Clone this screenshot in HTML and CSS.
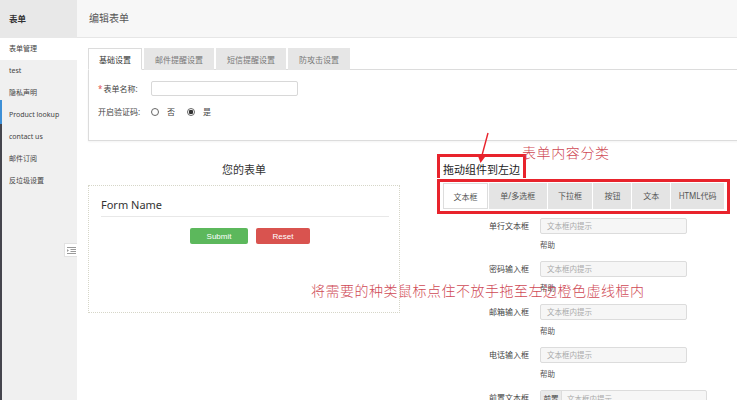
FILE: index.html
```html
<!DOCTYPE html>
<html lang="zh-CN">
<head>
    <meta charset="UTF-8">
    <title>编辑表单</title>
    <link rel="stylesheet" href="styles.css">
</head>
<body>
<div class="page">

    <aside class="sidebar">
        <div class="side-title">表单</div>
        <ul class="side-menu">
            <li class="active">表单管理</li>
            <li>test</li>
            <li>隐私声明</li>
            <li>Product lookup</li>
            <li>contact us</li>
            <li>邮件订阅</li>
            <li>反垃圾设置</li>
        </ul>
        <button class="side-toggle" title="收起">
            <svg width="9" height="7" viewBox="0 0 9 7">
                <path d="M0 0.5H9M3.5 2.5H9M3.5 4.5H9M0 6.5H9" stroke="#9a9a9a" stroke-width="1"/>
                <path d="M0 2L2 3.5L0 5Z" fill="#9a9a9a"/>
            </svg>
        </button>
    </aside>

    <main class="main">
        <div class="main-head">编辑表单</div>

        <div class="content">
            <!-- 设置 tabs -->
            <div class="tabs">
                <span class="tab active">基础设置</span>
                <span class="tab">邮件提醒设置</span>
                <span class="tab">短信提醒设置</span>
                <span class="tab">防攻击设置</span>
            </div>
            <div class="panel">
                <div class="panel-row">
                    <label class="panel-label"><i class="req">*</i>表单名称:</label>
                    <input class="panel-input" type="text">
                </div>
                <div class="panel-row">
                    <label class="panel-label">开启验证码:</label>
                    <span class="radio"></span><span class="radio-text">否</span>
                    <span class="radio checked"></span><span class="radio-text">是</span>
                </div>
            </div>

            <div class="builder">
                <!-- 左边: 表单 -->
                <section class="your-form">
                    <h3 class="your-form-title">您的表单</h3>
                    <div class="drop-zone">
                        <div class="form-name">Form Name</div>
                        <div class="form-actions">
                            <button class="btn btn-submit">Submit</button>
                            <button class="btn btn-reset">Reset</button>
                        </div>
                    </div>
                </section>

                <!-- 右边: 组件 -->
                <section class="widgets">
                    <h3 class="widgets-title">拖动组件到左边</h3>
                    <div class="widget-tabs">
                        <span class="wtab active">文本框</span>
                        <span class="wtab">单/多选框</span>
                        <span class="wtab">下拉框</span>
                        <span class="wtab">按钮</span>
                        <span class="wtab">文本</span>
                        <span class="wtab">HTML代码</span>
                    </div>
                    <div class="widget-list">
                        <div class="widget">
                            <label class="widget-label">单行文本框</label>
                            <div class="widget-field">
                                <div class="fake-input">文本框内提示</div>
                                <div class="help">帮助</div>
                            </div>
                        </div>
                        <div class="widget">
                            <label class="widget-label">密码输入框</label>
                            <div class="widget-field">
                                <div class="fake-input">文本框内提示</div>
                                <div class="help">帮助</div>
                            </div>
                        </div>
                        <div class="widget">
                            <label class="widget-label">邮箱输入框</label>
                            <div class="widget-field">
                                <div class="fake-input">文本框内提示</div>
                                <div class="help">帮助</div>
                            </div>
                        </div>
                        <div class="widget">
                            <label class="widget-label">电话输入框</label>
                            <div class="widget-field">
                                <div class="fake-input">文本框内提示</div>
                                <div class="help">帮助</div>
                            </div>
                        </div>
                        <div class="widget">
                            <label class="widget-label">前置文本框</label>
                            <div class="widget-field">
                                <div class="fake-input prepend"><span class="addon">前置</span>文本框内提示</div>
                            </div>
                        </div>
                    </div>
                </section>
            </div>
        </div>

        <!-- 说明标注 -->
        <svg class="note-arrow" width="14" height="32" viewBox="0 0 14 32">
            <path d="M11 1L4 27" stroke="#e8232c" stroke-width="1.4"/>
            <path d="M1 24L3.5 31L8 25Z" fill="#e8232c"/>
        </svg>
        <div class="note note-cat">表单内容分类</div>
        <div class="note note-drag">将需要的种类鼠标点住不放手拖至左边橙色虚线框内</div>
    </main>

</div>
</body>
</html>
```

FILE: styles.css
```css
        * {
            box-sizing: border-box;
        }

        body {
            margin: 0;
            background-color: #fff;
            font-family: "Noto Sans", "Noto Sans CJK SC", sans-serif;
            color: #444;
            overflow: hidden;
        }

        .page {
            display: flex;
            width: 737px;
            height: 400px;
        }

        /* sidebar */
        .sidebar {
            position: relative;
            width: 77px;
            flex: none;
            background-color: #f0f0f0;
        }

        .sidebar::before {
            content: "";
            position: absolute;
            left: 0;
            top: 100px;
            bottom: 0;
            width: 2px;
            background: linear-gradient(#3d8fd6 0, #3d8fd6 24px, #45454d 24px);
        }

        .side-title {
            height: 38px;
            line-height: 38px;
            padding-left: 9px;
            background-color: #e8e8e8;
            font-size: 8.5px;
            font-weight: bold;
            color: #333;
        }

        .side-menu {
            list-style: none;
            margin: 0;
            padding: 0;
        }

        .side-menu li {
            height: 22px;
            line-height: 22px;
            padding-left: 9px;
            font-size: 7px;
            color: #444;
        }

        .side-menu li.active {
            background-color: #fff;
        }

        .side-toggle {
            position: absolute;
            right: 0;
            top: 243px;
            width: 13px;
            height: 14px;
            padding: 0;
            border: 1px solid #e2e2e2;
            border-right: none;
            background-color: #fff;
            display: flex;
            align-items: center;
            justify-content: center;
        }

        /* main */
        .main {
            position: relative;
            flex: 1;
            overflow: hidden;
        }

        .main-head {
            height: 38px;
            line-height: 37px;
            padding-left: 12px;
            background-color: #f7f7f7;
            border-bottom: 1px solid #e6e6e6;
            font-size: 10px;
            color: #555;
        }

        .content {
            padding-left: 11px;
        }

        .tabs {
            display: flex;
            gap: 2px;
            margin-top: 10px;
            border-bottom: 1px solid #dcdcdc;
        }

        .tab {
            height: 22px;
            line-height: 21px;
            padding: 0 10px;
            margin-bottom: -1px;
            font-size: 8px;
            color: #777;
            background-color: #e6e6e6;
            border: 1px solid #e6e6e6;
        }

        .tab.active {
            color: #333;
            background-color: #fff;
            border-color: #dcdcdc;
            border-bottom-color: #fff;
        }

        .panel {
            height: 71px;
            margin-right: -4px;
            padding: 11px 0 0 9px;
            border: 1px solid #dcdcdc;
            border-top: none;
            box-shadow: 0 1px 2px rgba(0, 0, 0, .05);
        }

        .panel-row {
            display: flex;
            align-items: center;
            height: 15px;
            margin-bottom: 8px;
            font-size: 8px;
            color: #444;
        }

        .panel-label {
            width: 53px;
        }

        .req {
            font-style: normal;
            color: #e05050;
            margin-right: 1px;
        }

        .panel-input {
            width: 147px;
            height: 15px;
            margin: 0;
            border: 1px solid #d8d8d8;
            border-radius: 2px;
            background-color: #fff;
        }

        .radio {
            width: 8px;
            height: 8px;
            margin-left: 0;
            border: 1px solid #666;
            border-radius: 50%;
            background-color: #fff;
        }

        .radio.checked {
            margin-left: 12px;
            background: radial-gradient(circle, #333 0, #333 2px, #fff 2.5px);
        }

        .radio-text {
            margin-left: 8px;
        }

        /* builder */
        .builder {
            display: flex;
            align-items: flex-start;
            gap: 37px;
            margin-top: 13px;
        }

        .your-form {
            width: 312px;
            flex: none;
        }

        .your-form-title {
            margin: 8px 0 7px;
            font-size: 11px;
            line-height: 16px;
            font-weight: normal;
            text-align: center;
            color: #333;
        }

        .drop-zone {
            height: 128px;
            padding: 0 10px 0 12px;
            border: 1px dotted #d6d6c8;
        }

        .form-name {
            margin-top: 11px;
            padding-bottom: 3px;
            line-height: 16px;
            font-size: 11px;
            color: #333;
            border-bottom: 1px solid #e8e8e8;
        }

        .form-actions {
            display: flex;
            gap: 8px;
            margin-top: 11px;
            padding-left: 89px;
        }

        .btn {
            height: 16px;
            padding: 0;
            border: none;
            border-radius: 2px;
            color: #fff;
            font-family: "Liberation Sans", "Noto Sans", sans-serif;
            font-size: 8px;
        }

        .btn-submit {
            width: 58px;
            background-color: #5cb85c;
        }

        .btn-reset {
            width: 54px;
            background-color: #d9534f;
        }

        .widgets {
            width: 300px;
            flex: none;
        }

        .widgets-title {
            display: inline-block;
            margin: 0;
            padding: 5px 3px 1px 3px;
            border: 3px solid #e8232c;
            border-bottom: none;
            line-height: 15px;
            font-size: 11px;
            font-weight: normal;
            color: #222;
        }

        .widget-tabs {
            display: flex;
            gap: 1px;
            width: 293px;
            padding: 1px 3px 2px;
            border: 3px solid #e8232c;
        }

        .wtab {
            height: 26px;
            line-height: 26px;
            text-align: center;
            font-size: 8px;
            color: #555;
            background-color: #e4e4e4;
        }

        .wtab:nth-child(1) { width: 45px; }
        .wtab:nth-child(2) { width: 58px; }
        .wtab:nth-child(3) { width: 45px; }
        .wtab:nth-child(4) { width: 38px; }
        .wtab:nth-child(5) { width: 38px; }
        .wtab:nth-child(6) { width: 53px; }

        .wtab.active {
            background-color: #fff;
            border: 1px solid #ddd;
        }

        .widget-list {
            margin-top: 4px;
        }

        .widget {
            display: flex;
            margin-bottom: 11px;
        }

        .widget-label {
            width: 93px;
            padding-right: 1px;
            line-height: 16px;
            text-align: right;
            font-size: 8px;
            color: #444;
        }

        .widget-field {
            margin-left: 10px;
        }

        .fake-input {
            width: 147px;
            height: 16px;
            line-height: 14px;
            padding-left: 6px;
            border: 1px solid #dcdcdc;
            border-radius: 2px;
            background-color: #f6f6f6;
            font-size: 7.5px;
            color: #aaa;
        }

        .fake-input.prepend {
            display: flex;
            width: 167px;
            height: 18px;
            line-height: 16px;
            padding-left: 0;
        }

        .addon {
            width: 21px;
            margin-right: 5px;
            text-align: center;
            color: #444;
            background-color: #eaeaea;
            border-right: 1px solid #dcdcdc;
        }

        .help {
            margin-top: 6px;
            line-height: 10px;
            font-size: 7.5px;
            color: #555;
        }

        /* 标注 */
        .note {
            position: absolute;
            font-family: "Liberation Serif", "Noto Sans CJK SC", serif;
            font-weight: 300;
            color: #cf4a55;
            white-space: nowrap;
        }

        .note-cat {
            left: 445px;
            top: 145px;
            font-size: 14px;
            line-height: 18px;
            letter-spacing: 0.6px;
        }

        .note-drag {
            left: 234px;
            top: 283px;
            font-size: 14px;
            line-height: 18px;
            letter-spacing: 0.5px;
        }

        .note-arrow {
            position: absolute;
            left: 400px;
            top: 132px;
        }
```
